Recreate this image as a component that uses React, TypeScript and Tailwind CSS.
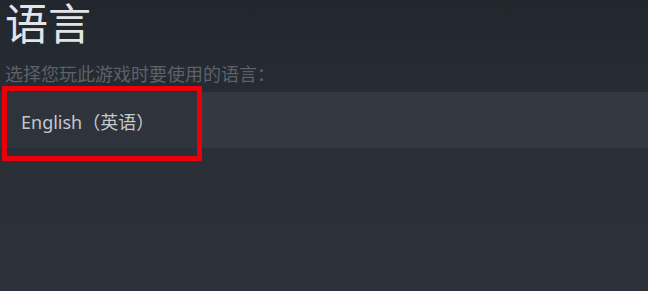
export default function App() {
  return (
    <div className="w-[648px] h-[291px] overflow-hidden bg-gradient-to-b from-[#22262d] via-[#2a2e36] to-[#2d3139] font-['Noto_Sans','Noto_Sans_CJK_SC',sans-serif]">
      <h1 className="pl-[5px] text-[43px] leading-[48px] font-normal text-[#e2e4e7]">语言</h1>
      <p className="mt-[14px] pl-[5px] text-[18px] leading-[24px] text-[#5c626b]">选择您玩此游戏时要使用的语言：</p>
      <div className="relative mt-[6px] flex h-[56px] bg-[#343840]">
        <div className="flex w-[200px] flex-col bg-[#2f333b]">
          <div className="flex flex-1 items-center pl-[21px] pt-[5px] text-[18px] text-[#c4c8ce]">English（英语）</div>
        </div>
        <div className="absolute left-[2px] top-[-6px] h-[75px] w-[200px] border-[5px] border-[#e8000a]" />
      </div>
    </div>
  );
}
